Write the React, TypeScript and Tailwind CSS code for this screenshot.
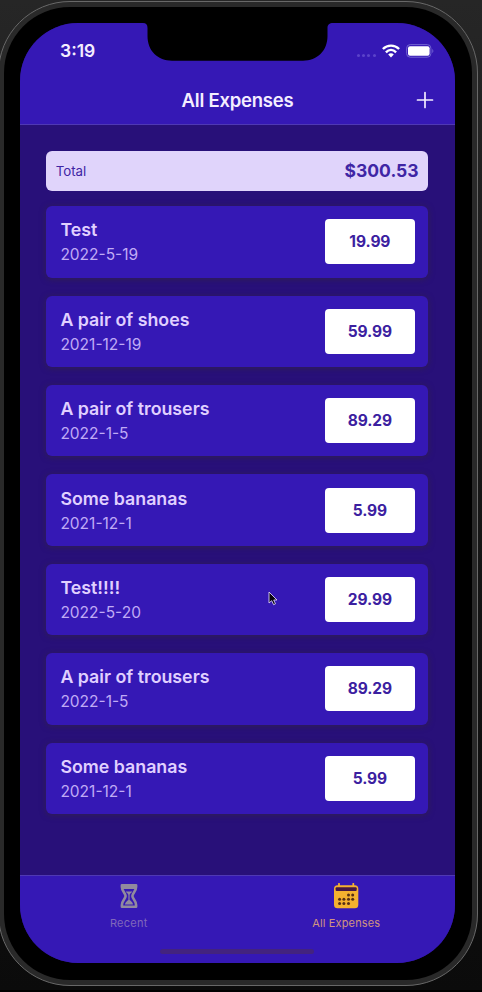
type Expense = { title: string; date: string; amount: string };

const expenses: Expense[] = [
  { title: "Test", date: "2022-5-19", amount: "19.99" },
  { title: "A pair of shoes", date: "2021-12-19", amount: "59.99" },
  { title: "A pair of trousers", date: "2022-1-5", amount: "89.29" },
  { title: "Some bananas", date: "2021-12-1", amount: "5.99" },
  { title: "Test!!!!", date: "2022-5-20", amount: "29.99" },
  { title: "A pair of trousers", date: "2022-1-5", amount: "89.29" },
  { title: "Some bananas", date: "2021-12-1", amount: "5.99" },
];

const calendarDots = [
  [15.5, 12], [19.7, 12],
  [6.6, 16.3], [10.9, 16.3], [15.5, 16.3], [19.7, 16.3],
  [6.6, 20.6], [10.9, 20.6], [15.5, 20.6],
];

function Notch() {
  return (
    <svg className="absolute left-[123px] top-0" width="190" height="38" viewBox="0 0 190 38" fill="#000">
      <path d="M0 0H190C186.500 0 184.500 1.500 184.500 5V13C184.500 28 174 37.700 160 37.700H29C15 37.700 4.500 28 4.500 13V5C4.500 1.500 3 0 0 0Z" />
    </svg>
  );
}

function StatusBar() {
  return (
    <div className="flex h-[53px] items-center justify-between pl-10 pr-[21px] pt-[2px]">
      <span className="text-[17.500px] font-semibold leading-5 text-[#f4edff]">3:19</span>
      <div className="flex items-center">
        <div className="mr-[6px] mt-[9px] flex gap-[2.200px]">
          {[0, 1, 2, 3].map((i) => (
            <span key={i} className="size-[3px] rounded-full bg-[#5b43ca]" />
          ))}
        </div>
        <svg className="mr-[6.500px]" width="18" height="14" viewBox="0 0 18 14" fill="none" stroke="#fff" strokeWidth="2.400">
          <path d="M.9 5C5.500.5 12.500.5 17.100 5" />
          <path d="M3.900 8.300C6.900 5.300 11.100 5.300 14.100 8.300" />
          <path d="M6.200 10.500C7.800 8.900 10.200 8.900 11.800 10.500L9 13.400Z" fill="#fff" stroke="none" />
        </svg>
        <svg width="28" height="14" viewBox="0 0 28 14" fill="none">
          <rect x=".6" y=".6" width="24.300" height="12.600" rx="3.600" stroke="#7263d2" />
          <rect x="2" y="2.200" width="21.600" height="9.500" rx="2" fill="#fff" />
          <path d="M26.300 5V9C27.700 8.400 27.700 5.600 26.300 5Z" fill="#7263d2" />
        </svg>
      </div>
    </div>
  );
}

function Header() {
  return (
    <header className="h-[102.300px] shrink-0 border-b border-[#4f38b4] bg-[#3518b5]">
      <StatusBar />
      <div className="grid h-12 grid-cols-[1fr_auto_1fr] items-center">
        <span />
        <h1 className="text-[18.500px] font-semibold leading-6 tracking-[-0.220px] text-[#f4edff]">All Expenses</h1>
        <svg className="mr-[21px] justify-self-end" width="18" height="18" viewBox="0 0 18 18" stroke="#f4edff" strokeWidth="1.700">
          <path d="M1.500 9H16.500M9 1.500V16.500" strokeLinecap="round" />
        </svg>
      </div>
    </header>
  );
}

function ExpenseCard({ title, date, amount }: Expense) {
  return (
    <li className="flex h-[71.400px] items-center justify-between rounded-[6px] bg-[#3518b5] pl-[14px] pr-[13.300px] shadow-[0_1px_6px_#30204f]">
      <div className="pt-[2px]">
        <p className="text-[17.800px] font-semibold leading-6 text-[#e0d0ff]">{title}</p>
        <p className="mt-[1px] text-[15.500px] leading-6 text-[#c0abf5]">{date}</p>
      </div>
      <div className="flex h-[45px] w-[89.500px] items-center justify-center rounded-[4px] bg-white text-[15.500px] font-bold tracking-[-0.080px] text-[#3b20a0]">
        {amount}
      </div>
    </li>
  );
}

function HourglassIcon() {
  return (
    <svg width="26" height="26" viewBox="0 0 26 26" fill="none">
      <path
        d="M5.900 2.200H20.100V4C20.100 8.500 16.400 10.500 16.400 13C16.400 15.500 20.100 17.500 20.100 22V23.800H5.900V22C5.900 17.500 9.600 15.500 9.600 13C9.600 10.500 5.900 8.500 5.900 4Z"
        stroke="currentColor"
        strokeWidth="2.600"
        strokeLinejoin="round"
      />
      <path
        d="M6 2H20V6H6ZM9.700 8.500H16.300C15.500 9.900 13.700 10.700 13.600 12V17C15 18 17 19.500 17 21.500H9C9 19.500 11 18 12.400 17V12C12.300 10.700 10.500 9.900 9.700 8.500Z"
        fill="currentColor"
      />
    </svg>
  );
}

function CalendarIcon() {
  return (
    <svg width="26" height="26" viewBox="0 0 26 26" fill="currentColor">
      <rect x="1" y="2.300" width="24.300" height="23" rx="3.500" />
      <path d="M6 .8V3M20.300 .8V3" stroke="currentColor" strokeWidth="1.800" strokeLinecap="round" />
      <rect x="2.600" y="4.300" width="21.100" height="3.600" rx="1" fill="#471842" />
      <g fill="#583015">
        {calendarDots.map(([x, y]) => (
          <circle key={`${x}-${y}`} cx={x} cy={y} r="1.500" />
        ))}
      </g>
    </svg>
  );
}

function TabBar() {
  return (
    <nav className="relative grid h-[88.500px] shrink-0 grid-cols-2 border-t border-[#4f38b4] bg-[#3518b5]">
      <div className="flex flex-col items-center pt-[7px] text-[#918a9e]">
        <HourglassIcon />
        <span className="mt-[6.500px] text-[11px] leading-4 tracking-[0.250px] text-[#8068bb]">Recent</span>
      </div>
      <div className="flex flex-col items-center pt-[7px] text-[#f5b12f]">
        <CalendarIcon />
        <span className="mt-[6.500px] text-[11px] leading-4 tracking-[0.150px] text-[#d09480]">All Expenses</span>
      </div>
      <div className="absolute bottom-[9px] left-[140px] h-[5px] w-[154px] rounded-full bg-[#43237f] blur-[0.500px]" />
    </nav>
  );
}

function Cursor() {
  return (
    <svg className="absolute left-[248px] top-[568px]" width="10" height="15" viewBox="0 0 10 15">
      <path d="M1 1V12L3.700 9.700L5.600 13.700L7.500 12.800L5.700 9H9Z" fill="#08050f" stroke="#d9cdf4" strokeWidth=".9" />
    </svg>
  );
}

export default function App() {
  return (
    <div className="h-[992px] w-[482px] overflow-hidden border-b-2 border-black bg-gradient-to-b from-[#262626] via-[#171717] to-[#0b0b0b] font-['Inter',sans-serif]">
      <div className="-ml-[2px] w-[480px] pt-px">
        <div className="h-[985px] rounded-[72px] border border-[#686868] bg-[#292929] p-[5px]">
          <div className="h-full w-full rounded-[66px] bg-black pl-[16px] pt-[16px]">
            <main className="relative flex h-[940px] w-[435px] flex-col overflow-hidden rounded-[58px] bg-[#281079]">
              <Header />
              <section className="flex-1 pl-[26.400px] pr-[27.100px] pt-[26.200px]">
                <div className="flex h-[39.300px] items-center justify-between rounded-[6px] bg-[#e0d4fb] px-[9.300px] text-[#3f26a5]">
                  <span className="pt-px text-[13.300px]">Total</span>
                  <strong className="text-[17.500px] font-bold">$300.53</strong>
                </div>
                <ul className="mt-[15.500px] flex flex-col gap-[18px]">
                  {expenses.map((expense, index) => (
                    <ExpenseCard key={index} {...expense} />
                  ))}
                </ul>
              </section>
              <TabBar />
              <Notch />
              <Cursor />
            </main>
          </div>
        </div>
      </div>
    </div>
  );
}
